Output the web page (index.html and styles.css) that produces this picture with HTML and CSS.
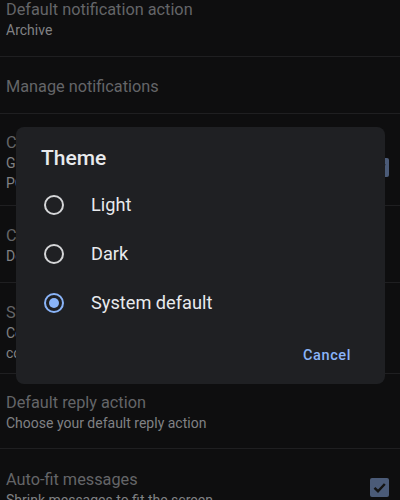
FILE: index.html
```html
<!DOCTYPE html>
<html>
<head>
<meta charset="utf-8">
<link rel="stylesheet" href="styles.css">
</head>
<body>
<div class="settings">
  <div class="row r1">
    <div class="text">
      <div class="title">Default notification action</div>
      <div class="sub">Archive</div>
    </div>
  </div>
  <div class="row r2">
    <div class="text">
      <div class="title">Manage notifications</div>
    </div>
  </div>
  <div class="row r3">
    <div class="text">
      <div class="title">Conversation view</div>
      <div class="sub">Group emails with the same topic together for IMAP,</div>
      <div class="sub">POP3 and Exchange accounts</div>
    </div>
    <div class="check mid"><svg viewBox="0 0 19 19" width="19" height="19"><polyline points="4.5,9.8 8,13.2 14.8,6" fill="none" stroke="#131313" stroke-width="2.4"/></svg></div>
  </div>
  <div class="row r4">
    <div class="text">
      <div class="title">Conversation list density</div>
      <div class="sub">Default</div>
    </div>
  </div>
  <div class="row r5">
    <div class="text">
      <div class="title">Swipe actions</div>
      <div class="sub">Configure swipe actions to quickly act on emails in the</div>
      <div class="sub">conversation list</div>
    </div>
  </div>
  <div class="row r6">
    <div class="text">
      <div class="title">Default reply action</div>
      <div class="sub">Choose your default reply action</div>
    </div>
  </div>
  <div class="row r7">
    <div class="text">
      <div class="title">Auto-fit messages</div>
      <div class="sub">Shrink messages to fit the screen</div>
    </div>
    <div class="check top"><svg viewBox="0 0 19 19" width="19" height="19"><polyline points="4.5,9.8 8,13.2 14.8,6" fill="none" stroke="#131313" stroke-width="2.4"/></svg></div>
  </div>
</div>

<div class="dialog">
  <div class="dlg-title">Theme</div>
  <div class="options">
    <div class="option"><span class="radio"></span><span class="label">Light</span></div>
    <div class="option"><span class="radio"></span><span class="label">Dark</span></div>
    <div class="option"><span class="radio on"><span class="dot"></span></span><span class="label">System default</span></div>
  </div>
  <div class="actions"><span class="btn">Cancel</span></div>
</div>
</body>
</html>
```
FILE: styles.css
```css
html, body {
  margin: 0;
  padding: 0;
  background: #0e0e0f;
  width: 400px;
  height: 500px;
  overflow: hidden;
  font-family: Roboto, "Noto Sans", sans-serif;
}
.settings {
  display: flex;
  flex-direction: column;
}
.row {
  display: flex;
  align-items: flex-start;
  padding-left: 6px;
  border-bottom: 1px solid #1f1f21;
  box-sizing: border-box;
  overflow: hidden;
}
.text {
  flex: 1;
  min-width: 0;
  white-space: nowrap;
}
.title {
  font-size: 16.3px;
  line-height: 20px;
  color: #646568;
}
.sub {
  font-size: 14px;
  line-height: 20px;
  color: #808184;
}
.r1 { height: 57px; padding-top: 0; }
.r2 { height: 57px; padding-top: 20px; }
.r3 { height: 92px; padding-top: 19px; }
.r4 { height: 77px; padding-top: 20px; }
.r5 { height: 91px; padding-top: 20px; }
.r6 { height: 75px; padding-top: 19px; }
.r7 { height: 60px; padding-top: 21px; }
.check {
  width: 19px;
  height: 19px;
  border-radius: 2px;
  background: #4b5b78;
  margin-right: 11px;
  flex: none;
}
.check svg { display: block; }
.check.mid { margin-top: 25px; }
.check.top { margin-top: 8px; }

.dialog {
  position: absolute;
  left: 16px;
  top: 127px;
  width: 369px;
  height: 257px;
  background: #1f2023;
  border-radius: 8px;
  box-sizing: border-box;
  padding-top: 19px;
}
.dlg-title {
  font-size: 21px;
  line-height: 24px;
  font-weight: 500;
  color: #e8eaed;
  padding-left: 25px;
}
.options {
  margin-top: 10px;
  display: flex;
  flex-direction: column;
}
.option {
  height: 49px;
  display: flex;
  align-items: center;
  padding-left: 28px;
  gap: 27px;
}
.radio {
  width: 20px;
  height: 20px;
  box-sizing: border-box;
  border: 2px solid #d5d6d8;
  border-radius: 50%;
  display: flex;
  align-items: center;
  justify-content: center;
  flex: none;
}
.radio.on { border-color: #8ab4f8; }
.dot {
  width: 10px;
  height: 10px;
  border-radius: 50%;
  background: #8ab4f8;
}
.label {
  font-size: 18.2px;
  color: #e8eaed;
}
.actions {
  margin-top: 19px;
  display: flex;
  justify-content: flex-end;
  padding-right: 34px;
}
.btn {
  font-size: 14.5px;
  line-height: 20px;
  font-weight: 500;
  letter-spacing: 0.6px;
  color: #8ab4f8;
}
```
